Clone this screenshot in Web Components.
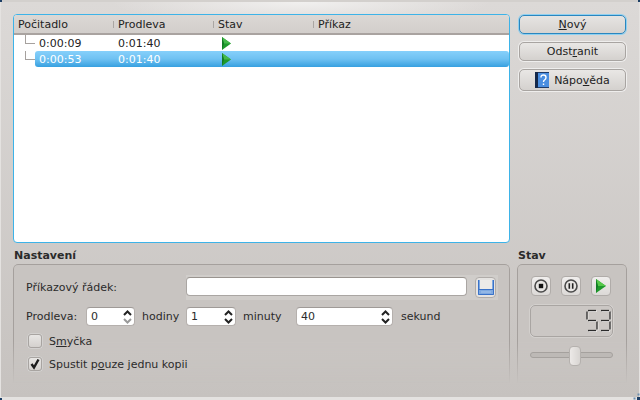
<!DOCTYPE html>
<html lang="cs">
<head>
<meta charset="utf-8">
<title>Časovače</title>
<style>
html, body { margin: 0; padding: 0; width: 640px; height: 400px; overflow: hidden; }
body { font: 11px/13px "DejaVu Sans", sans-serif; color: #222; }
u { text-underline-offset: 1px; }
</style>
</head>
<body>
<timer-window>
  <timer-tree slot="list"></timer-tree>
  <push-button slot="buttons" focused><u>N</u>ový</push-button>
  <push-button slot="buttons">Odst<u>r</u>anit</push-button>
  <push-button slot="buttons" help>Nápo<u>v</u>ěda</push-button>
  <group-box slot="settings" label="Nastavení"><settings-form></settings-form></group-box>
  <group-box slot="state" label="Stav" style="margin-left:-2px;width:110px"><state-panel></state-panel></group-box>
</timer-window>

<script>
const arrow = `<svg width="9" height="13" viewBox="0 0 9 13" style="display:block"><path d="M0 0 L9 6.5 L0 13Z" fill="#1f9a2c"/><path d="M0 0 L9 6.5 L2 6.5Z" fill="#45b84a"/><path d="M0 0 L2 6.5 L0 13Z" fill="#127a24"/></svg>`;

class TimerWindow extends HTMLElement {
  constructor() {
    super();
    this.attachShadow({mode: 'open'}).innerHTML = `
<style>
:host { display: block; width: 640px; height: 400px; box-sizing: border-box; overflow: hidden; position: relative;
  background: #e4e2e0; }
#frame { height: 397px; box-sizing: border-box; margin: 0 1px; padding: 12px 12px 0 12px; border-top: 2px solid #d3d0cd;
  background: radial-gradient(ellipse 190px 22px at 300px 0, #f1f0ef, rgba(241,240,239,0)) top/100% 12px no-repeat,
    linear-gradient(#dcd9d7, #c6c2bf);
  display: grid; grid-template-columns: 497px 107px; column-gap: 9px; grid-template-rows: 229px 148px; row-gap: 6px; }
#buttons { display: flex; flex-direction: column; gap: 8px; padding-top: 1px; }
.c { position: absolute; width: 2px; height: 2px; background: #1d3f66; }
</style>
<div id="frame">
  <slot name="list"></slot>
  <div id="buttons"><slot name="buttons"></slot></div>
  <slot name="settings"></slot>
  <slot name="state"></slot>
</div>
<div class="c" style="left:0;top:0"></div>
<div class="c" style="right:0;top:0"></div>
<div class="c" style="left:0;bottom:0"></div>
<div class="c" style="right:0;bottom:0;width:3px;height:3px;box-shadow:-4px 0 0 -.5px #6d8fb0,0 -4px 0 -.5px #6d8fb0"></div>`;
  }
}

class TimerTree extends HTMLElement {
  constructor() {
    super();
    this.attachShadow({mode: 'open'}).innerHTML = `
<style>
:host { display: block; box-sizing: border-box; height: 229px; background: #fff; border: 1px solid #3db3e8; border-radius: 4px; overflow: hidden; }
#head { display: flex; height: 20px; box-sizing: border-box; padding: 1px 0 0 4px; align-items: center; background: linear-gradient(#dbd8d5, #d2cecb);
  border-bottom: 2px solid #a9a3a0; }
#head div { position: relative; }
#head div + div::before { content: ""; position: absolute; left: -5px; top: 3px; height: 7px; border-left: 1px solid #aaa6a3; }
.c1, .c2, .c3 { width: 100px; flex: none; }
.row { display: flex; height: 16px; align-items: center; }
.t { width: 83px; flex: none; padding-left: 4px; box-sizing: border-box; }
.p { width: 104px; flex: none; }
.line { width: 21px; flex: none; position: relative; height: 16px; }
.line::before { content: ""; position: absolute; left: 11px; top: 0; height: 8px; border-left: 1px solid #a6a19e; }
.line::after { content: ""; position: absolute; left: 11px; width: 10px; top: 8px; border-top: 1px solid #a6a19e; }
.body { display: flex; flex: 1; height: 16px; align-items: center; border-radius: 3px; }
.sel .body { background: linear-gradient(#86d0fb, #6fc1f2 50%, #36a0e0); color: #fff; }
</style>
<div id="head">
  <div class="c1">Počitadlo</div><div class="c2">Prodleva</div><div class="c3">Stav</div><div>Příkaz</div>
</div>
<div id="rows">
  <div class="row"><div class="line"></div><div class="body"><div class="t">0:00:09</div><div class="p">0:01:40</div><div>${arrow}</div></div></div>
  <div class="row sel"><div class="line"></div><div class="body"><div class="t">0:00:53</div><div class="p">0:01:40</div><div>${arrow}</div></div></div>
</div>`;
  }
}

class PushButton extends HTMLElement {
  constructor() {
    super();
    const help = this.hasAttribute('help') ? `<svg width="14" height="16" viewBox="0 0 14 16"><rect width="14" height="16" fill="#1f3a66"/><rect x="3" y="1" width="11" height="14" fill="#4a8ee0"/><rect width="3" height="16" fill="#14284a"/><path d="M6 5.5 Q6 3 8.5 3 Q11 3 11 5.5 Q11 7 9.5 8 Q8.5 8.7 8.5 10 M8.5 11.5 V13" fill="none" stroke="#fff" stroke-width="1.4"/></svg>` : '';
    this.attachShadow({mode: 'open'}).innerHTML = `
<style>
:host { display: flex; height: 19px; box-sizing: border-box; align-items: center; justify-content: center; gap: 5px;
  border: 1px solid #a8a4a1; border-radius: 5px; background: linear-gradient(#e9e7e5, #d4d1ce);
  box-shadow: 0 0 0 1px #efeeed; }
:host([focused]) { border-color: #2a86bf; box-shadow: 0 0 0 1px #8fd0f0; background: linear-gradient(#e6e4e2, #d6d3d0); }
:host([help]) { height: 22px; }
svg { display: block; }
</style>${help}<span><slot></slot></span>`;
  }
}

class GroupBox extends HTMLElement {
  constructor() {
    super();
    this.attachShadow({mode: 'open'}).innerHTML = `
<style>
:host { display: block; }
#t { font-weight: bold; height: 15px; padding-left: 1px; color: #2b2b2b; }
#b { position: relative; height: 130px; }
/* the frame fades out towards the bottom */
#b::before { content: ""; position: absolute; inset: 0; box-sizing: border-box; border: 1px solid #a5a09d; border-bottom: 0; border-radius: 5px 5px 0 0;
  background: #c8c4c1; -webkit-mask-image: linear-gradient(#000 60%, transparent 92%); mask-image: linear-gradient(#000 60%, transparent 92%); }
#c { position: relative; }
</style>
<div id="t">${this.getAttribute('label')}</div>
<div id="b"><div id="c"><slot></slot></div></div>`;
  }
}

class SpinBox extends HTMLElement {
  constructor() {
    super();
    const dim = this.hasAttribute('min');
    this.attachShadow({mode: 'open'}).innerHTML = `
<style>
:host { display: block; box-sizing: border-box; height: 19px; background: #fff; border: 1px solid #b5b0ad; border-top-color: #9f9a97; border-radius: 4px;
  position: relative; padding: 2px 0 0 4px; }
svg { position: absolute; right: 2px; top: 2px; }
</style><slot></slot>
<svg width="9" height="14" viewBox="0 0 9 14"><path d="M1 5 L4.5 1.5 L8 5" fill="none" stroke="#222" stroke-width="2"/><path d="M1 9 L4.5 12.5 L8 9" fill="none" stroke="${dim ? '#999' : '#222'}" stroke-width="2"/></svg>`;
  }
}

class CheckRow extends HTMLElement {
  constructor() {
    super();
    const mark = this.hasAttribute('checked') ? `<svg width="12" height="12" viewBox="0 0 12 12"><path d="M2.5 6 L5 9.5 L9.5 1.5" fill="none" stroke="#1c1c1c" stroke-width="2.4"/></svg>` : '';
    this.attachShadow({mode: 'open'}).innerHTML = `
<style>
:host { display: flex; align-items: center; gap: 7px; height: 14px; }
#box { width: 14px; height: 14px; box-sizing: border-box; display: flex; align-items: center; justify-content: center; border: 1px solid #a8a4a1; border-radius: 3px; background: linear-gradient(#e8e6e4, #d4d1ce); box-shadow: 0 0 0 .5px #ddd; }
</style><div id="box">${mark}</div><span><slot></slot></span>`;
  }
}

class SettingsForm extends HTMLElement {
  constructor() {
    super();
    this.attachShadow({mode: 'open'}).innerHTML = `
<style>
:host { display: block; padding: 11px 0 0 13px; color: #2b2b2b; }
.r { display: flex; align-items: center; }
#lbl { width: 160px; flex: none; }
#well { background: #d0cdca; height: 25px; width: 312px; box-sizing: border-box; padding-top: 2px; display: flex; flex: none; }
#input { width: 281px; height: 19px; box-sizing: border-box; background: #fff; border: 1px solid #aaa6a3; border-top-color: #99948f; border-radius: 4px; flex: none; }
#save { width: 21px; height: 21px; box-sizing: border-box; margin-left: 8px; border: 1px solid #b0aca9; border-radius: 4px; background: #e5e3e1;
  display: flex; align-items: center; justify-content: center; }
#delay { margin-top: 7px; height: 19px; }
#delay span { flex: none; }
#loop { margin-top: 8px; padding-left: 2px; }
#once { margin-top: 9px; padding-left: 2px; }
</style>
<div class="r">
  <div id="lbl">Příkazový řádek:</div>
  <div id="well"><div id="input"></div>
    <div id="save"><svg width="16" height="15" viewBox="0 0 16 15"><rect width="16" height="15" fill="#7fa9e0"/><rect x="2" width="12" height="9" fill="#eceae8"/><path d="M0.5 0 V14.5 H15.5 V0 M0 9.5 H16" fill="none" stroke="#3a72c8"/><path d="M3 12 H13" stroke="#a9c6ec"/></svg></div>
  </div>
</div>
<div class="r" id="delay">
  <span style="width:60px">Prodleva:</span>
  <spin-box min style="width:49px">0</spin-box>
  <span style="margin-left:7px;width:44px">hodiny</span>
  <spin-box style="width:50px">1</spin-box>
  <span style="margin-left:7px;width:53px">minuty</span>
  <spin-box style="width:97px">40</spin-box>
  <span style="margin-left:8px">sekund</span>
</div>
<check-row id="loop">S<u>m</u>yčka</check-row>
<check-row id="once" checked>Spustit p<u>o</u>uze jednu kopii</check-row>`;
  }
}

class LcdNumber extends HTMLElement {
  constructor() {
    super();
    const segs = { t:[1,0,9,0], tl:[0,1,0,9], tr:[10,1,10,9], m:[1,10,9,10], bl:[0,11,0,19], br:[10,11,10,19], b:[1,20,9,20] };
    const map = { 5:['t','tl','m','br','b'], 3:['t','tr','m','br','b'] };
    const digit = (d, x) => map[d].map(s => {
      const [a,b,c,e] = segs[s];
      return `<line x1="${a+x}" y1="${b}" x2="${c+x}" y2="${e}"/>`;
    }).join('');
    const value = this.getAttribute('value');
    this.attachShadow({mode: 'open'}).innerHTML = `
<style>
:host { display: flex; box-sizing: border-box; width: 83px; height: 32px; border: 1px solid #a9a5a2; border-radius: 5px; justify-content: flex-end; align-items: center;
  background: #cbc7c4; box-shadow: 0 0 0 .5px #dedcda; }
line { stroke-width: 1.3; }
.s line { stroke: #f0eeec; }
.d line { stroke: #2b2b2b; }
</style>
<svg width="26" height="24" viewBox="-1 -1.5 26 24" role="img" aria-label="${value}">
  <g class="s" transform="translate(.8 .8)">${digit(value[0], 0)}${digit(value[1], 13)}</g>
  <g class="d">${digit(value[0], 0)}${digit(value[1], 13)}</g>
</svg>`;
  }
}

class StatePanel extends HTMLElement {
  constructor() {
    super();
    this.attachShadow({mode: 'open'}).innerHTML = `
<style>
:host { display: block; padding: 12px 0 0 13px; }
#btns { display: flex; gap: 10px; padding-left: 1px; }
.b { width: 20px; height: 20px; box-sizing: border-box; border: 1px solid #b0aca9; border-radius: 4px; background: linear-gradient(#f0eeed, #dcd9d7); display: flex; align-items: center; justify-content: center; }
lcd-number { margin-top: 9px; }
#track { position: relative; height: 20px; margin-top: 9px; width: 83px; }
#track::before { content: ""; position: absolute; left: 0; right: 0; top: 6px; height: 6px; border: 1px solid #a5a19e; box-sizing: border-box; border-radius: 3px; background: #bdb9b6; }
#thumb { position: absolute; left: 39px; top: 0; width: 12px; height: 20px; box-sizing: border-box; border: 1px solid #b5b1ae; border-radius: 4px; background: linear-gradient(90deg, #ece9e7, #d8d5d2); }
</style>
<div id="btns">
  <div class="b"><svg width="14" height="14" viewBox="0 0 14 14"><circle cx="7" cy="7" r="6" fill="#e8e6e4" stroke="#4a4a4a" stroke-width="1.6"/><rect x="4.8" y="4.8" width="4.4" height="4.4" fill="#111"/></svg></div>
  <div class="b"><svg width="14" height="14" viewBox="0 0 14 14"><circle cx="7" cy="7" r="6" fill="#e8e6e4" stroke="#4a4a4a" stroke-width="1.6"/><path d="M5.3 4.3 V9.7 M8.7 4.3 V9.7" stroke="#222" stroke-width="1.6"/></svg></div>
  <div class="b"><svg width="10" height="14" viewBox="0 0 10 14"><path d="M0 0 L10 7 L0 14Z" fill="#1f9a2c"/><path d="M0 0 L10 7 L2 7Z" fill="#56c84a"/><path d="M0 0 L2 7 L0 14Z" fill="#127a24"/></svg></div>
</div>
<lcd-number value="53"></lcd-number>
<div id="track"><div id="thumb"></div></div>`;
  }
}

customElements.define('spin-box', SpinBox);
customElements.define('check-row', CheckRow);
customElements.define('lcd-number', LcdNumber);
customElements.define('settings-form', SettingsForm);
customElements.define('state-panel', StatePanel);
customElements.define('group-box', GroupBox);
customElements.define('push-button', PushButton);
customElements.define('timer-tree', TimerTree);
customElements.define('timer-window', TimerWindow);
</script>
</body>
</html>
